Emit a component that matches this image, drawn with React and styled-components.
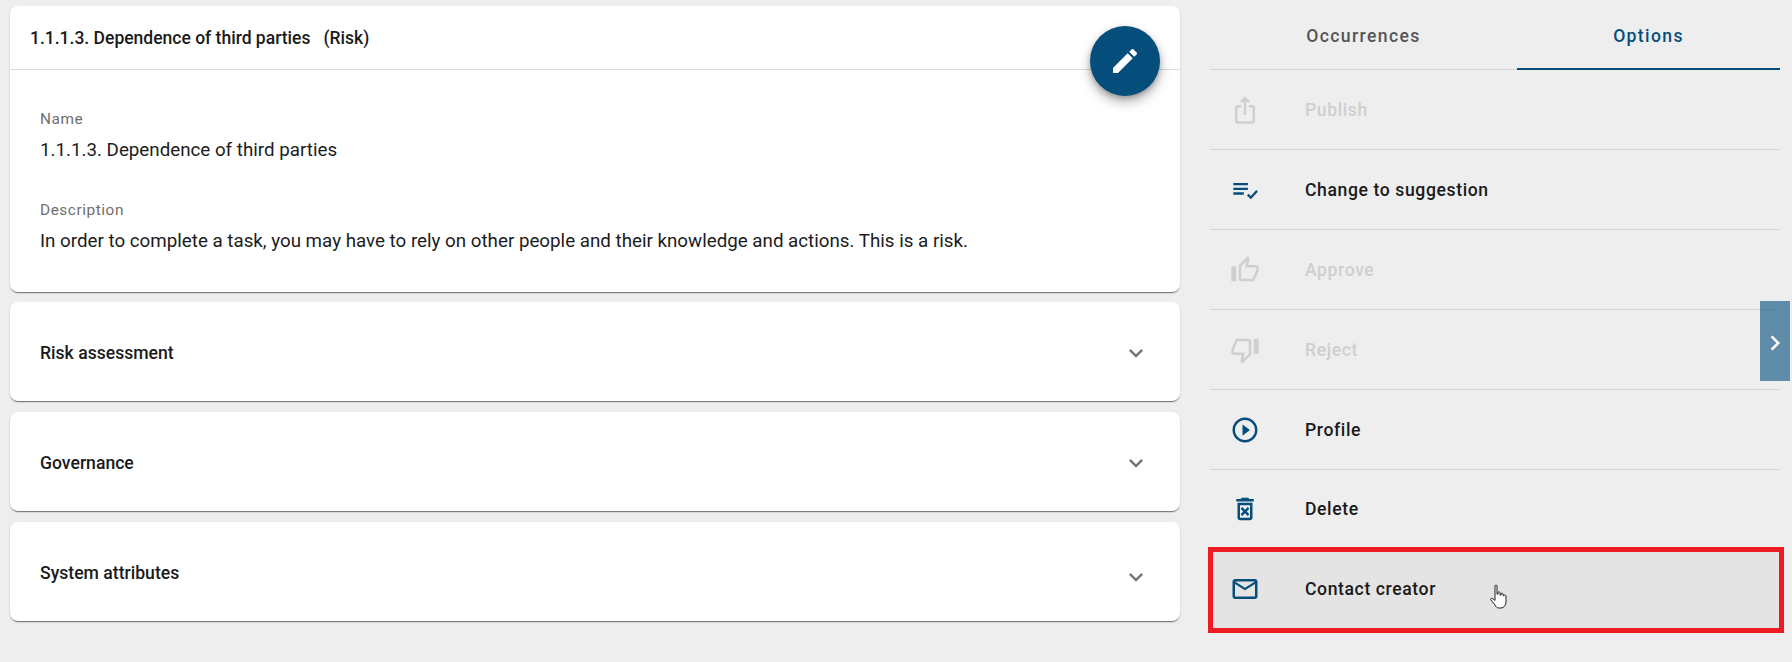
import React from "react";
import styled, { createGlobalStyle } from "styled-components";

const Global = createGlobalStyle`
  html, body {
    margin: 0;
    padding: 0;
    background: #eeeeee;
  }
  body {
    font-family: Roboto, "Liberation Sans", sans-serif;
    color: #1a1a1a;
  }
`;

const Page = styled.div`
  position: relative;
  display: grid;
  grid-template-columns: 1170px 570px;
  column-gap: 30px;
  height: 662px;
  padding: 6px 0 0 10px;
  box-sizing: border-box;
  overflow: hidden;
`;

const Left = styled.main`
  display: flex;
  flex-direction: column;
`;

const Card = styled.section`
  background: #fff;
  border-radius: 8px;
  box-shadow: 0 2px 1px -1px rgba(0, 0, 0, 0.42), 0 1px 2px 0 rgba(0, 0, 0, 0.2);
`;

const DetailCard = styled(Card)`
  position: relative;
  height: 286px;
  margin-bottom: 10px;
`;

const CardHeader = styled.header`
  height: 64px;
  box-sizing: border-box;
  border-bottom: 1px solid #dcdcdc;
  padding: 0 0 0 20px;
  display: flex;
  align-items: center;
  font-size: 17.5px;
  font-weight: 500;
  white-space: pre;
`;

const CardBody = styled.div`
  padding: 40px 30px 0;
`;

const Field = styled.div`
  height: 91px;
`;

const Label = styled.div`
  font-size: 15.4px;
  line-height: 18px;
  letter-spacing: 0.55px;
  color: #6f6f6f;
`;

const Value = styled.div`
  font-size: 18.75px;
  line-height: 24px;
  margin-top: 10px;
  color: #1c1c1c;
`;

const Fab = styled.button`
  position: absolute;
  top: 20px;
  right: 20px;
  width: 70px;
  height: 70px;
  border: 0;
  padding: 0;
  border-radius: 50%;
  background: #054e7c;
  color: #fff;
  display: flex;
  align-items: center;
  justify-content: center;
  box-shadow: 0 6px 12px rgba(0, 0, 0, 0.3), 0 2px 5px rgba(0, 0, 0, 0.2);
`;

const Accordion = styled(Card)`
  height: 99px;
  box-sizing: border-box;
  margin-bottom: 11px;
  padding: 2px 30px 0 30px;
  display: flex;
  align-items: center;
  justify-content: space-between;
  font-size: 17.6px;
  font-weight: 500;
`;

const Chevron = styled.span`
  display: flex;
  margin-top: ${(p) => (p.$low ? "8px" : "0")};
  color: #757575;
`;

const Side = styled.aside`
  display: flex;
  flex-direction: column;
`;

const Tabs = styled.div`
  display: grid;
  grid-template-columns: 307px 263px;
  height: 64px;
  box-sizing: border-box;
  border-bottom: 1px solid #d6d6d6;
`;

const Tab = styled.div`
  display: flex;
  align-items: center;
  justify-content: center;
  padding-bottom: 2px;
  font-size: 17.6px;
  font-weight: 500;
  letter-spacing: 1.36px;
  color: ${(p) => (p.$active ? "#054e7c" : "#555555")};
  border-bottom: 2px solid ${(p) => (p.$active ? "#054e7c" : "transparent")};
  height: 64px;
  box-sizing: border-box;
`;

const Row = styled.div`
  position: relative;
  height: 80px;
  box-sizing: border-box;
  display: flex;
  align-items: center;
  padding-bottom: ${(p) => (p.$nudge ? "2px" : "0")};
  font-size: 17.6px;
  font-weight: 500;
  letter-spacing: 0.6px;
  border-bottom: ${(p) => (p.$plain ? "0" : "1px solid #d6d6d6")};
  background: ${(p) => (p.$hover ? "#e4e4e4" : "transparent")};
  color: ${(p) => (p.$disabled ? "#cfcfcf" : "#1a1a1a")};
`;

const RowIcon = styled.span`
  width: 95px;
  padding-right: 25px;
  box-sizing: border-box;
  display: flex;
  justify-content: center;
  color: ${(p) => (p.$disabled ? "#cfcfcf" : "#054e7c")};
`;

const Highlight = styled.div`
  position: absolute;
  inset: -3px -4px -3px -2px;
  border: 5px solid #ed1c24;
  pointer-events: none;
`;

const Pointer = styled.svg`
  position: absolute;
  left: 280px;
  top: 34px;
`;

const SideToggle = styled.div`
  position: absolute;
  left: 1760px;
  top: 301px;
  width: 30px;
  height: 80px;
  background: rgba(5, 78, 124, 0.61);
  color: #fff;
  display: flex;
  justify-content: center;
  padding-top: 27px;
  box-sizing: border-box;
`;

const Icon = ({ d, size = 30 }) => (
  <svg width={size} height={size} viewBox="0 0 24 24" fill="currentColor">
    <path d={d} />
  </svg>
);

const paths = {
  edit: "M3 17.25V21h3.75L17.81 9.94l-3.75-3.75L3 17.25zM20.71 7.04c.39-.39.39-1.02 0-1.41l-2.34-2.34c-.39-.39-1.02-.39-1.41 0l-1.83 1.83 3.75 3.75 1.83-1.83z",
  more: "M16.59 8.59L12 13.17 7.41 8.59 6 10l6 6 6-6z",
  right: "M10 6L8.59 7.41 13.17 12l-4.58 4.59L10 18l6-6z",
  publish: "M16 5l-1.42 1.42-1.59-1.59V16h-1.98V4.83L9.42 6.42 8 5l4-4 4 4zm4 5v11c0 1.1-.9 2-2 2H6c-1.11 0-2-.9-2-2V10c0-1.11.89-2 2-2h3v2H6v11h12V10h-3V8h3c1.1 0 2 .89 2 2z",
  suggest: "M14.500 10H2v2h12.500v-2zm0-4H2v2h12.500V6zM2 16h9v-2H2v2zM21.600 12L23 13.400 17 20l-3.300-3.300 1.400-1.400 1.900 1.900z",
  up: "M9 21h9c.83 0 1.54-.5 1.84-1.22l3.02-7.05c.09-.23.14-.47.14-.73v-2c0-1.1-.9-2-2-2h-6.31l.95-4.57.03-.32c0-.41-.17-.79-.44-1.06L14.17 1 7.58 7.59C7.22 7.95 7 8.45 7 9v10c0 1.1.9 2 2 2zM9 9l4.34-4.34L12 10h9v2l-3 7H9V9zM1 9h4v12H1z",
  down: "M15 3H6c-.83 0-1.54.5-1.84 1.22l-3.02 7.05c-.09.23-.14.47-.14.73v2c0 1.1.9 2 2 2h6.31l-.95 4.57-.03.32c0 .41.17.79.44 1.06L9.83 23l6.59-6.59c.36-.36.58-.86.58-1.41V5c0-1.1-.9-2-2-2zm0 12l-4.34 4.34L12 14H3v-2l3-7h9v10zm4-12h4v12h-4z",
  play: "M10 16.5l6-4.5-6-4.5v9zM12 2C6.48 2 2 6.48 2 12s4.48 10 10 10 10-4.48 10-10S17.52 2 12 2zm0 18c-4.41 0-8-3.59-8-8s3.59-8 8-8 8 3.59 8 8-3.59 8-8 8z",
  trash: "M14.12 10.47L12 12.59l-2.13-2.12-1.41 1.41L10.59 14l-2.12 2.12 1.41 1.41L12 15.41l2.12 2.12 1.41-1.41L13.41 14l2.12-2.12zM15.5 4l-1-1h-5l-1 1H5v2h14V4zM6 19c0 1.1.9 2 2 2h8c1.1 0 2-.9 2-2V7H6v12zM8 9h8v10H8V9z",
  mail: "M20 4H4c-1.1 0-1.99.9-1.99 2L2 18c0 1.1.9 2 2 2h16c1.1 0 2-.9 2-2V6c0-1.1-.9-2-2-2zm0 14H4V8l8 5 8-5v10zm-8-7L4 6h16l-8 5z",
};

const options = [
  { label: "Publish", icon: "publish", disabled: true },
  { label: "Change to suggestion", icon: "suggest", size: 28 },
  { label: "Approve", icon: "up", disabled: true },
  { label: "Reject", icon: "down", disabled: true },
  { label: "Profile", icon: "play" },
  { label: "Delete", icon: "trash", nudge: true },
];

const sections = [
  { title: "Risk assessment" },
  { title: "Governance" },
  { title: "System attributes", low: true },
];

export default function App() {
  return (
    <Page>
      <Global />
      <Left>
        <DetailCard>
          <CardHeader>1.1.1.3. Dependence of third parties   (Risk)</CardHeader>
          <CardBody>
            <Field>
              <Label>Name</Label>
              <Value>1.1.1.3. Dependence of third parties</Value>
            </Field>
            <Field>
              <Label>Description</Label>
              <Value>
                In order to complete a task, you may have to rely on other people and their knowledge and actions. This is a risk.
              </Value>
            </Field>
          </CardBody>
          <Fab aria-label="Edit">
            <Icon d={paths.edit} size={32} />
          </Fab>
        </DetailCard>
        {sections.map((s) => (
          <Accordion key={s.title}>
            {s.title}
            <Chevron $low={s.low}>
              <Icon d={paths.more} size={28} />
            </Chevron>
          </Accordion>
        ))}
      </Left>
      <Side>
        <Tabs>
          <Tab>Occurrences</Tab>
          <Tab $active>Options</Tab>
        </Tabs>
        {options.map((o) => (
          <Row key={o.label} $disabled={o.disabled} $nudge={o.nudge}>
            <RowIcon $disabled={o.disabled}>
              <Icon d={paths[o.icon]} size={o.size} />
            </RowIcon>
            {o.label}
          </Row>
        ))}
        <Row $plain $hover $nudge>
          <RowIcon>
            <Icon d={paths.mail} />
          </RowIcon>
          Contact creator
          <Highlight />
          <Pointer width="18" height="25" viewBox="0 0 18 25">
            <path
              d="M5 2c0-1.300 2-1.300 2 0v8l1 .2V8.500c0-1 2-1 2 0V11l1 .2V10c0-1 2-1 2 0v1.500l1 .2c0-1 2-.800 2 .300V18c0 3-2 6-5 6H9c-2 0-3-1-4-3l-4-5c-.800-1 .500-2.400 1.700-1.400L5 16.500z"
              fill="#fff"
              stroke="#222"
              strokeWidth="1"
              strokeLinejoin="round"
            />
          </Pointer>
        </Row>
      </Side>
      <SideToggle>
        <Icon d={paths.right} size={30} />
      </SideToggle>
    </Page>
  );
}
